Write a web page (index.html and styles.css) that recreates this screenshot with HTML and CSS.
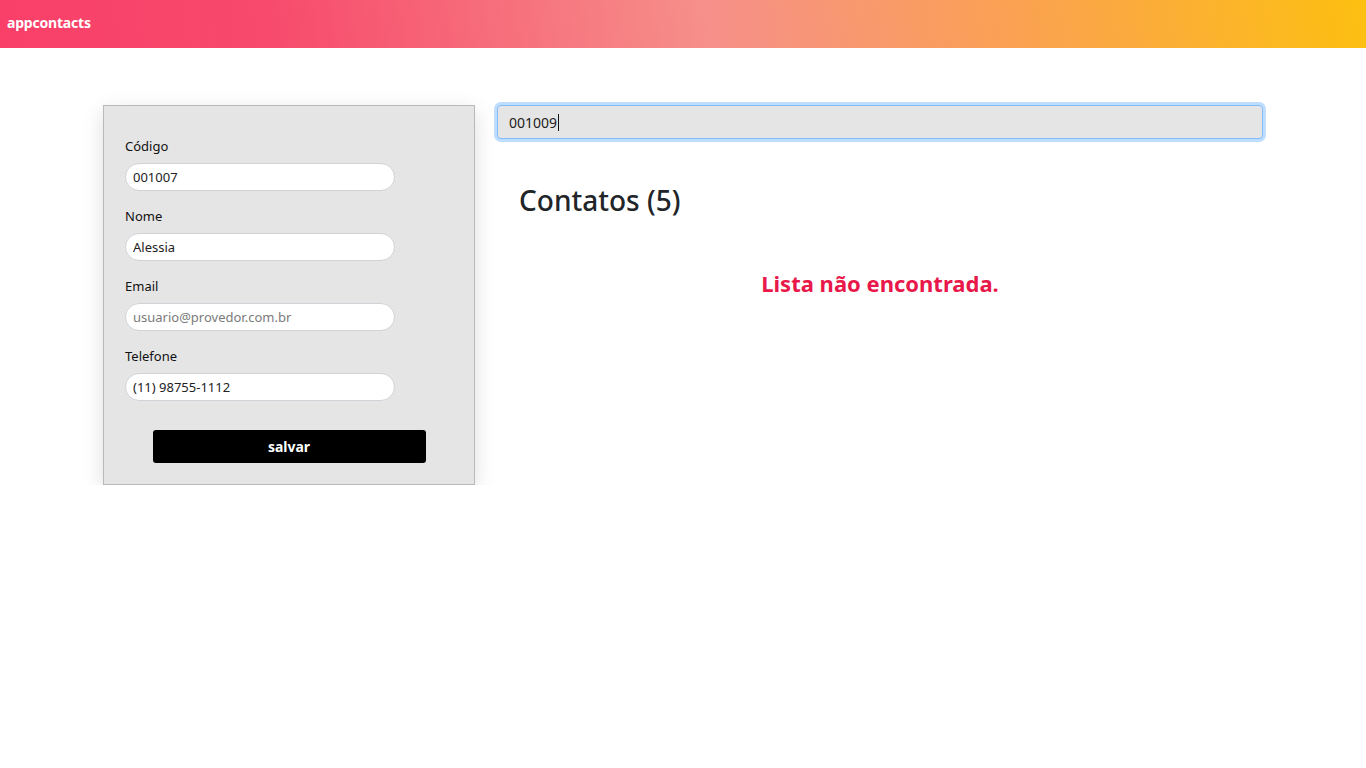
FILE: index.html
```html
<!DOCTYPE html>
<html lang="pt-BR">
<head>
<meta charset="utf-8">
<title>appcontacts</title>
<link rel="stylesheet" href="styles.css">
</head>
<body>
<header class="topbar">
  <span class="brand">appcontacts</span>
</header>
<main class="content">
  <form class="card">
    <div class="field">
      <label class="label">Código</label>
      <input class="pill" type="text" value="001007">
    </div>
    <div class="field">
      <label class="label">Nome</label>
      <input class="pill" type="text" value="Alessia">
    </div>
    <div class="field">
      <label class="label">Email</label>
      <input class="pill" type="text" placeholder="usuario@provedor.com.br">
    </div>
    <div class="field">
      <label class="label">Telefone</label>
      <input class="pill" type="text" value="(11) 98755-1112">
    </div>
    <div class="actions">
      <button class="save" type="button">salvar</button>
    </div>
  </form>
  <section class="list">
    <div class="search"><span class="search-text">001009</span><span class="caret"></span></div>
    <h3 class="title">Contatos (5)</h3>
    <h4 class="empty">Lista não encontrada.</h4>
  </section>
</main>
</body>
</html>
```
FILE: styles.css
```css
* { box-sizing: border-box; }
html, body { margin: 0; padding: 0; }
body {
  font-family: "Noto Sans", "Open Sans", sans-serif;
  color: #212529;
  background: #fff;
  font-size: 13px;
}
.topbar {
  height: 48px;
  display: flex;
  align-items: center;
  padding: 0 7px 4px;
  background: linear-gradient(80deg, #f93f68 0%, #f74a6c 20%, #f6908a 52%, #faa250 75%, #fdc010 100%);
}
.brand {
  color: #fff;
  font-weight: 700;
  font-size: 14px;
  letter-spacing: -0.2px;
}
.content {
  display: flex;
  align-items: flex-start;
  gap: 22px;
  padding: 57px 103px 0;
}
.card {
  width: 372px;
  flex: none;
  background: #e5e5e5;
  border: 1px solid #b9b9b9;
  box-shadow: 0 6px 20px rgba(0, 0, 0, 0.13);
  padding: 30px 21px 21px;
  display: flex;
  flex-direction: column;
  gap: 15px;
}
.field { display: flex; flex-direction: column; gap: 7px; }
.label {
  font-size: 13px;
  line-height: 20px;
  color: #111;
}
.pill {
  width: 270px;
  height: 28px;
  border: 1px solid #cfd3d8;
  border-radius: 14px;
  background: #fff;
  padding: 0 7px;
  font-family: inherit;
  font-size: 13px;
  color: #222;
  outline: none;
}
.pill::placeholder { color: #7b7b7b; }
.actions {
  display: flex;
  justify-content: center;
  padding-top: 14px;
}
.save {
  width: 273px;
  height: 33px;
  background: #000;
  color: #fff;
  border: none;
  border-radius: 3px;
  font-family: inherit;
  font-weight: 700;
  font-size: 14px;
}
.list { flex: 1; display: flex; flex-direction: column; }
.search {
  height: 34px;
  background: #e5e5e5;
  border: 1px solid #80bdff;
  border-radius: 4px;
  box-shadow: 0 0 0 3px rgba(0, 123, 255, 0.25);
  display: flex;
  align-items: center;
  padding: 0 11px;
  font-size: 14px;
  color: #222;
}
.caret { width: 1px; height: 17px; background: #111; margin-left: 1px; }
.title {
  margin: 44px 0 0 22px;
  font-size: 28px;
  font-weight: 500;
  line-height: 34px;
  color: #212529;
}
.empty {
  margin: 53px 0 0;
  text-align: center;
  font-size: 22px;
  font-weight: 700;
  line-height: 27px;
  color: #e8194a;
}
```
